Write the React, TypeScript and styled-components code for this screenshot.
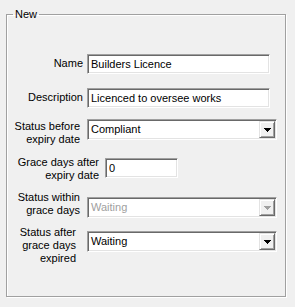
import React from "react";
import styled, { createGlobalStyle, css } from "styled-components";

const GlobalStyle = createGlobalStyle`
  html, body {
    margin: 0;
    background: #f0f0f0;
  }
  body {
    font-family: "Liberation Sans", Arial, sans-serif;
    font-size: 11px;
    color: #000;
  }
`;

const Frame = styled.div`
  width: 295px;
  height: 307px;
  box-sizing: border-box;
  padding: 8px 9px 0 6px;
`;

const GroupBox = styled.fieldset`
  margin: 0;
  padding: 0;
  min-inline-size: 0;
  height: 289px;
  box-sizing: border-box;
  border: 1px solid #a0a0a0;
  box-shadow: inset 1px 1px 0 #fff, 1px 1px 0 #fff;
`;

const Legend = styled.legend`
  margin-left: 6px;
  padding: 0 2px;
  line-height: 13px;
`;

const Form = styled.div`
  display: flex;
  flex-direction: column;
  padding-top: 33px;
`;

const Row = styled.div<{ $mt: number; $h: number }>`
  display: flex;
  align-items: flex-start;
  margin-top: ${p => p.$mt}px;
  height: ${p => p.$h}px;
`;

const Label = styled.label<{ $w: number; $gap: number; $dy: number }>`
  flex-shrink: 0;
  box-sizing: border-box;
  width: ${p => p.$w}px;
  padding-right: ${p => p.$gap}px;
  margin-top: ${p => p.$dy}px;
  text-align: right;
  line-height: 13px;
  white-space: nowrap;
`;

const sunken = css`
  box-sizing: border-box;
  border: 1px solid;
  border-color: #a0a0a0 #fff #fff #a0a0a0;
  box-shadow: inset 1px 1px 0 #696969, inset -1px -1px 0 #e3e3e3;
  background: #fff;
`;

const TextBox = styled.input<{ $w: number }>`
  ${sunken};
  width: ${p => p.$w}px;
  height: 20px;
  margin: 0;
  padding: 0 3px;
  font-family: "Liberation Sans", Arial, sans-serif;
  font-size: 11px;
  color: #000;
  outline: none;
`;

const Combo = styled.div<{ $disabled?: boolean }>`
  ${sunken};
  display: flex;
  align-items: center;
  width: 190px;
  height: 21px;
  padding: 1px;
  color: ${p => (p.$disabled ? "#a0a0a0" : "#000")};
`;

const ComboValue = styled.span`
  flex: 1;
  padding-left: 2px;
  line-height: 17px;
`;

const DropButton = styled.div`
  box-sizing: border-box;
  width: 16px;
  height: 17px;
  display: flex;
  align-items: center;
  justify-content: center;
  background: #f0f0f0;
  border: 1px solid;
  border-color: #e3e3e3 #696969 #696969 #e3e3e3;
  box-shadow: inset 1px 1px 0 #fff, inset -1px -1px 0 #a0a0a0;
`;

const Arrow = ({ color }: { color: string }) => (
  <svg width="7" height="4" viewBox="0 0 7 4" shapeRendering="crispEdges">
    <path d="M0 0h7v1H0z M1 1h5v1H1z M2 2h3v1H2z M3 3h1v1H3z" fill={color} />
  </svg>
);

const ComboBox = ({ value, disabled }: { value: string; disabled?: boolean }) => (
  <Combo $disabled={disabled}>
    <ComboValue>{value}</ComboValue>
    <DropButton>
      <Arrow color={disabled ? "#a0a0a0" : "#000"} />
    </DropButton>
  </Combo>
);

export default function App() {
  return (
    <>
      <GlobalStyle />
      <Frame>
        <GroupBox>
          <Legend>New</Legend>
          <Form>
            <Row $mt={0} $h={20}>
              <Label $w={80} $gap={4} $dy={3}>Name</Label>
              <TextBox $w={183} defaultValue="Builders Licence" />
            </Row>
            <Row $mt={14} $h={20}>
              <Label $w={80} $gap={4} $dy={3}>Description</Label>
              <TextBox $w={183} defaultValue="Licenced to oversee works" />
            </Row>
            <Row $mt={11} $h={21}>
              <Label $w={80} $gap={7} $dy={1}>
                Status before
                <br />
                expiry date
              </Label>
              <ComboBox value="Compliant" />
            </Row>
            <Row $mt={18} $h={20}>
              <Label $w={98} $gap={6} $dy={-2}>
                Grace days after
                <br />
                expiry date
              </Label>
              <TextBox $w={73} defaultValue="0" />
            </Row>
            <Row $mt={19} $h={21}>
              <Label $w={80} $gap={7} $dy={-6}>
                Status within
                <br />
                grace days
              </Label>
              <ComboBox value="Waiting" disabled />
            </Row>
            <Row $mt={13} $h={21}>
              <Label $w={80} $gap={11} $dy={-5}>
                Status after
                <br />
                grace days
                <br />
                expired
              </Label>
              <ComboBox value="Waiting" />
            </Row>
          </Form>
        </GroupBox>
      </Frame>
    </>
  );
}
